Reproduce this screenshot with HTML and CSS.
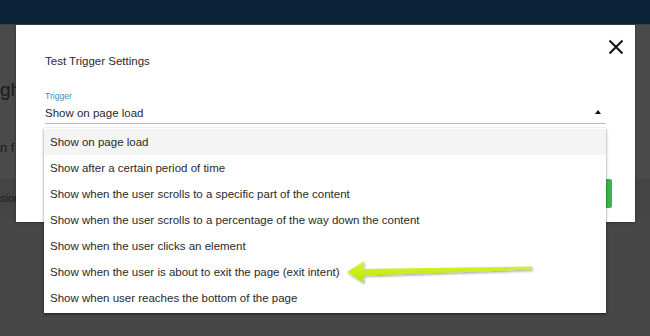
FILE: index.html
```html
<!DOCTYPE html>
<html>
<head>
<meta charset="utf-8">
<link rel="stylesheet" href="styles.css">
</head>
<body>
<div class="page">
  <header class="topbar"></header>
  <div class="bg">
    <div class="band band1"><span class="bg-heading">gh</span><span class="bg-text">n f</span></div>
    <div class="band band2"><span class="bg-small">sion</span></div>
    <div class="band band3"></div>
  </div>

  <div class="modal">
    <button class="close" aria-label="Close">
      <svg width="16" height="16" viewBox="0 0 16 16"><path d="M1.5 1.5 L14.5 14.5 M14.5 1.5 L1.5 14.5" stroke="#111" stroke-width="2" fill="none"/></svg>
    </button>
    <h2 class="title">Test Trigger Settings</h2>
    <div class="field">
      <label class="label">Trigger</label>
      <div class="select">
        <span class="value">Show on page load</span>
        <span class="caret"></span>
      </div>
    </div>
    <div class="footer">
      <button class="save"></button>
    </div>
  </div>

  <ul class="menu">
    <li class="item active">Show on page load</li>
    <li class="item">Show after a certain period of time</li>
    <li class="item">Show when the user scrolls to a specific part of the content</li>
    <li class="item">Show when the user scrolls to a percentage of the way down the content</li>
    <li class="item">Show when the user clicks an element</li>
    <li class="item">Show when the user is about to exit the page (exit intent)</li>
    <li class="item">Show when user reaches the bottom of the page</li>
  </ul>

  <svg class="pointer" width="650" height="336" viewBox="0 0 650 336">
    <defs>
      <linearGradient id="g" x1="0" y1="0" x2="0" y2="1">
        <stop offset="0" stop-color="#d8f53a"/>
        <stop offset="1" stop-color="#b8e600"/>
      </linearGradient>
      <filter id="sh" x="-10%" y="-50%" width="120%" height="200%">
        <feDropShadow dx="1" dy="1.5" stdDeviation="1.2" flood-color="#000" flood-opacity="0.35"/>
      </filter>
    </defs>
    <polygon filter="url(#sh)" fill="url(#g)" points="347,272 364,261 363,269 532,266.5 532,269.5 363,275.5 364,283"/>
  </svg>
</div>
</body>
</html>
```
FILE: styles.css
```css
* { box-sizing: border-box; }
html, body { margin: 0; padding: 0; }
body {
  width: 650px;
  height: 336px;
  overflow: hidden;
  font-family: "Liberation Sans", Arial, sans-serif;
  background: #474747;
}
.page { position: relative; width: 650px; height: 336px; }
.topbar {
  height: 25px;
  background: #0a2339;
  border-bottom: 1px solid #3a3f44;
}
.bg { display: flex; flex-direction: column; }
.band { position: relative; }
.band1 { height: 154px; background: #4a4a4a; display: flex; flex-direction: column; }
.band2 { height: 38px; background: #444444; display: flex; align-items: center; }
.band3 { height: 119px; background: #474747; }
.bg-heading { font-size: 19px; color: #1c1c1c; margin-top: 54px; }
.bg-text { font-size: 13px; color: #1c1c1c; margin-top: 39px; }
.bg-small { font-size: 11px; color: #1c1c1c; }

.modal {
  position: absolute;
  left: 16px;
  top: 25px;
  width: 619px;
  height: 197px;
  background: #fff;
  padding: 28px 29px 0 29px;
  box-shadow: 0 1px 3px rgba(0,0,0,.3);
}
.close {
  position: absolute;
  right: 11px;
  top: 14px;
  width: 16px;
  height: 16px;
  padding: 0;
  border: 0;
  background: none;
  display: block;
}
.close svg { display: block; }
.title {
  margin: 0;
  font-size: 11.5px;
  font-weight: 400;
  line-height: 16px;
  color: #2a2a2a;
}
.field { margin-top: 21px; }
.label {
  display: block;
  font-size: 8.6px;
  line-height: 12px;
  color: #3a8cc4;
}
.select {
  display: flex;
  align-items: center;
  justify-content: space-between;
  height: 22px;
  border-bottom: 1px solid #bdbdbd;
}
.value { font-size: 11.5px; color: #2a2a2a; line-height: 16px; }
.caret {
  width: 0; height: 0;
  border-left: 3px solid transparent;
  border-right: 3px solid transparent;
  border-bottom: 4px solid #111;
  margin-right: 5px;
  margin-top: -2px;
}
.footer {
  display: flex;
  justify-content: flex-end;
  margin-top: 55px;
  margin-right: -6px;
}
.save {
  width: 60px;
  height: 29px;
  border: 0;
  border-radius: 2px;
  background: #3cb54a;
}

.menu {
  position: absolute;
  left: 44px;
  top: 128px;
  width: 562px;
  margin: 0;
  padding: 1px 0 2px;
  list-style: none;
  background: #fff;
  box-shadow: 0 1px 3px rgba(0,0,0,.35), 0 2px 2px rgba(0,0,0,.15);
}
.item {
  height: 26px;
  line-height: 27px;
  padding-left: 6px;
  font-size: 11.5px;
  color: #2a2a2a;
  white-space: nowrap;
}
.item.active { background: #f4f4f4; }

.pointer { position: absolute; left: 0; top: 0; pointer-events: none; }
```
